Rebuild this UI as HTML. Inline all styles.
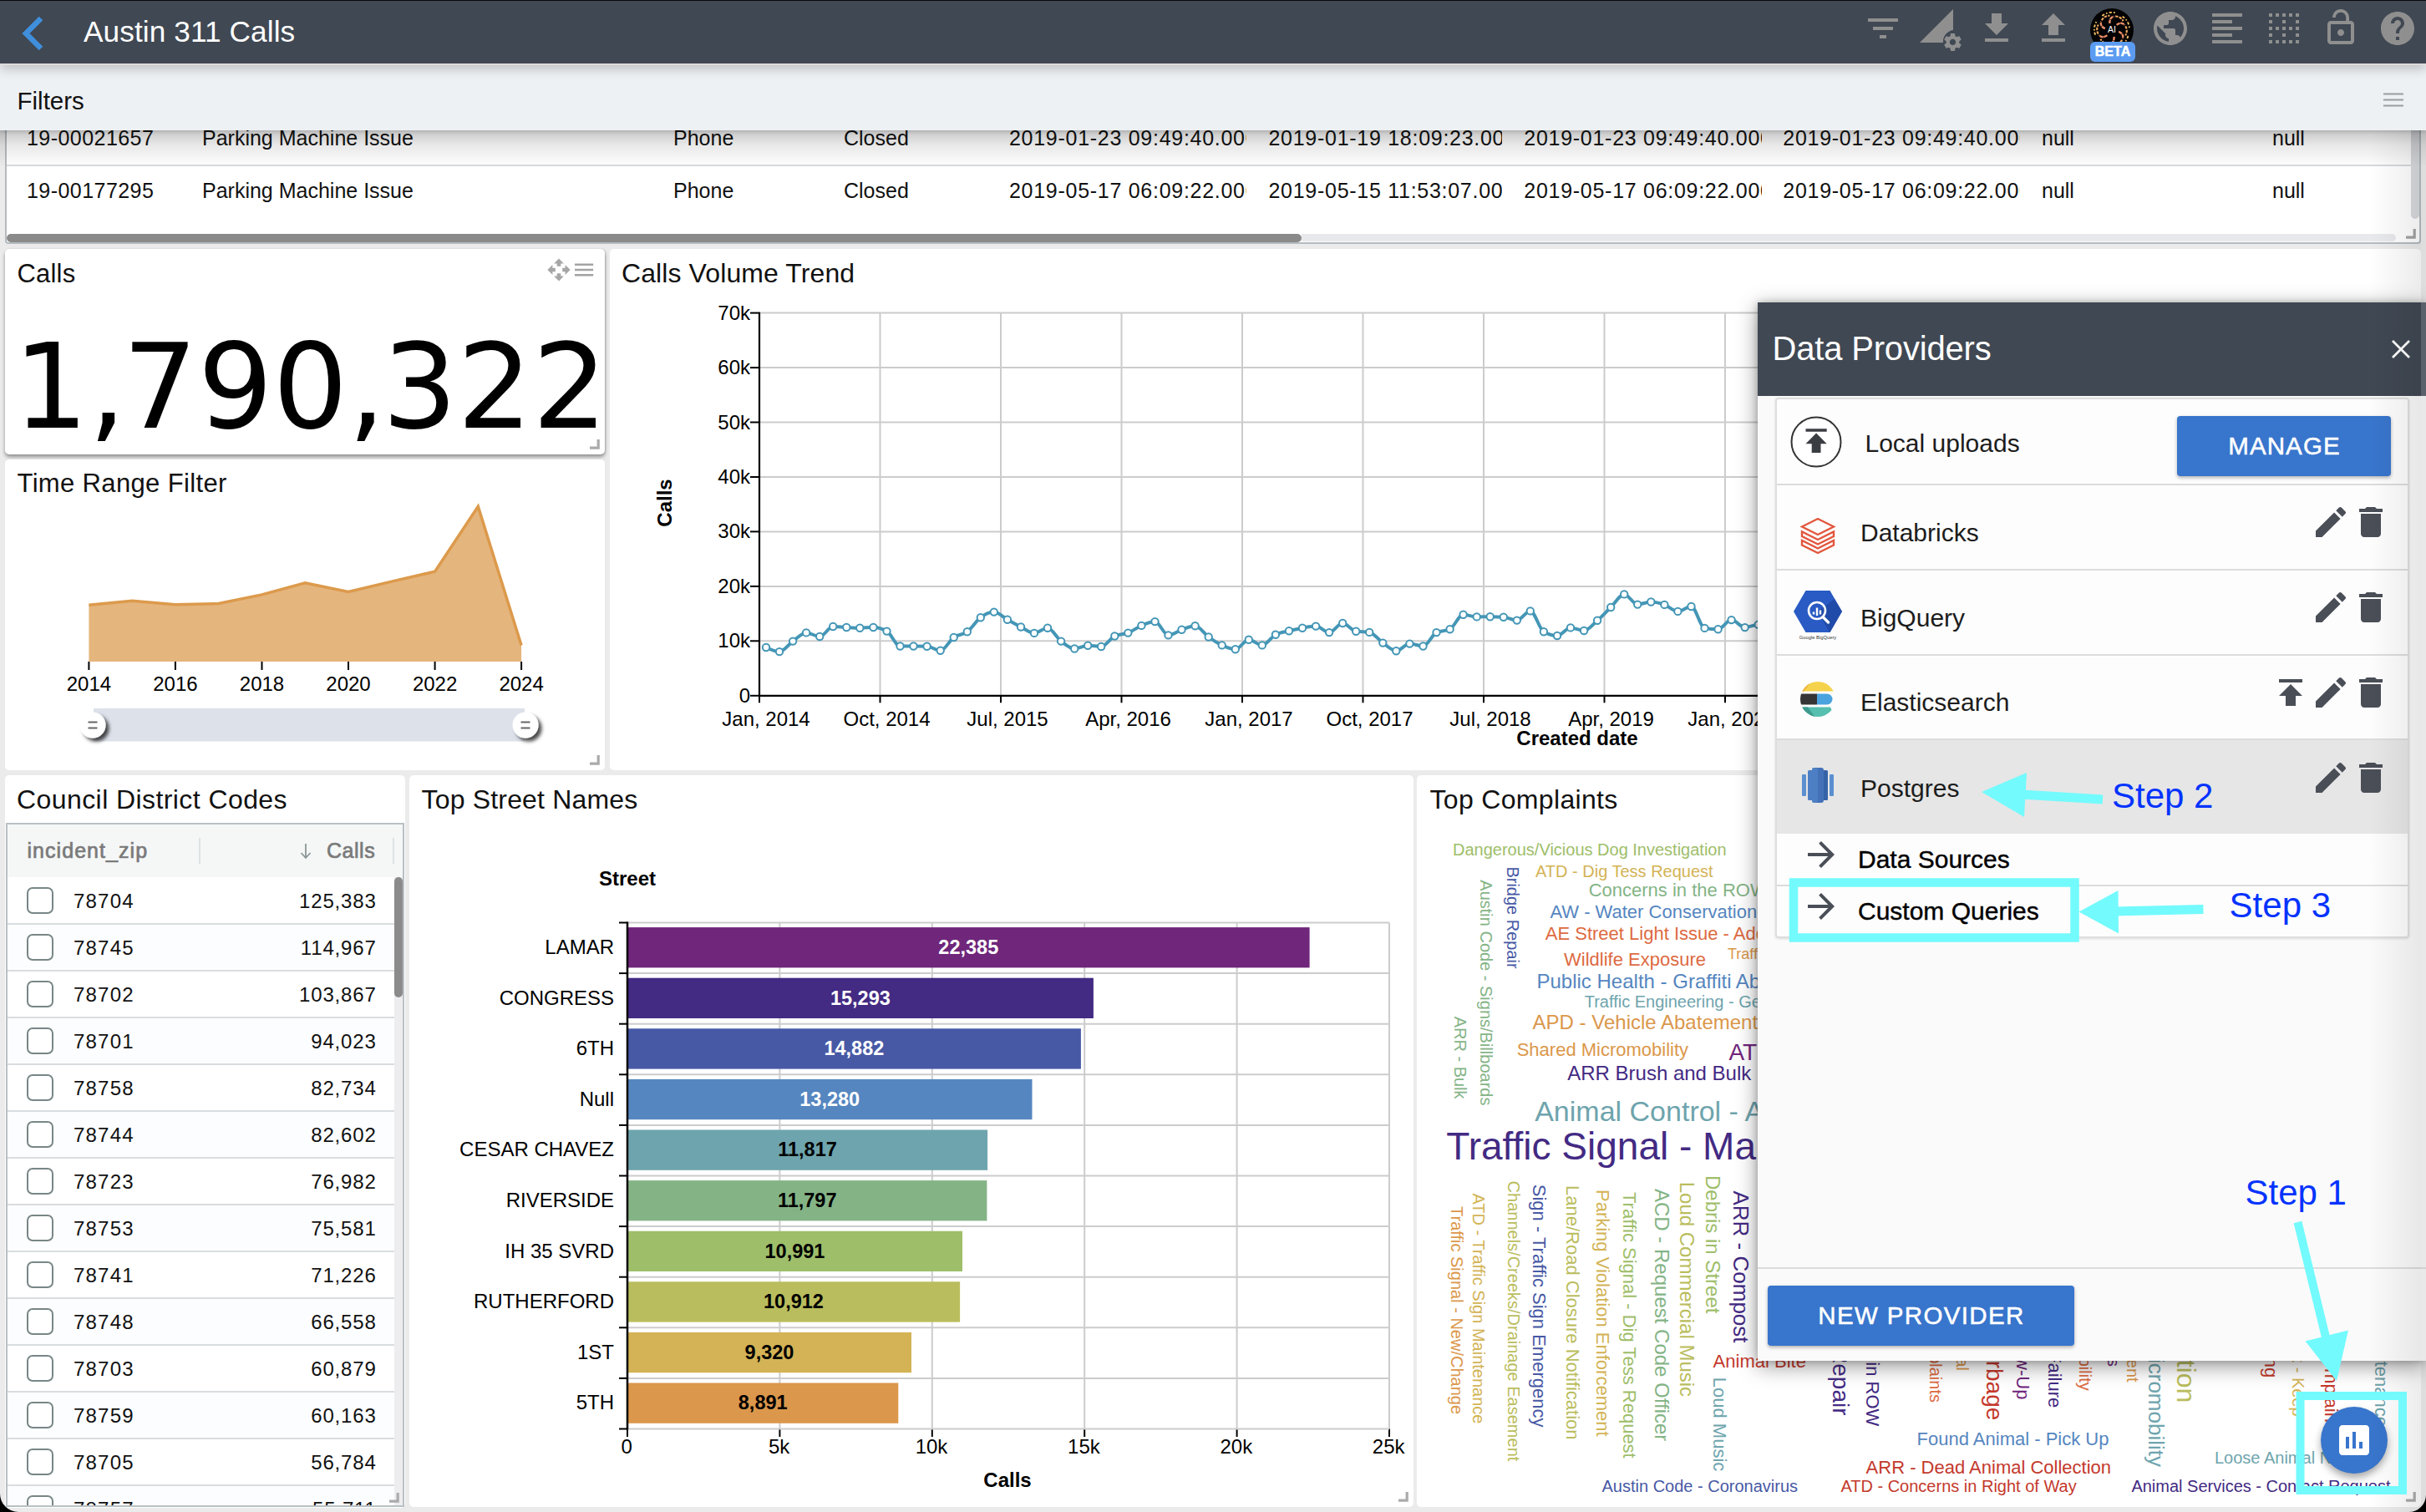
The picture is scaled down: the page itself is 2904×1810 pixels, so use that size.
<!DOCTYPE html><html lang="en"><head><meta charset="utf-8"><title>Austin 311 Calls</title><style>
html,body{margin:0;padding:0;}
body{width:2904px;height:1810px;overflow:hidden;background:#ebebeb;font-family:"Liberation Sans",sans-serif;}
#root{position:relative;width:2904px;height:1810px;overflow:hidden;background:#ebebeb;}
.t{position:absolute;white-space:nowrap;line-height:1;}
svg{overflow:visible}
svg text{white-space:pre}
</style></head><body><div id="root"><div style="position:absolute;left:6.0px;top:150.0px;width:2891.6px;height:142.0px;background:#fff;border:2px solid #b4bbc0;border-top:none;box-sizing:border-box;border-radius:0 0 4px 4px;"></div><div style="position:absolute;left:8.0px;top:197.0px;width:2878.0px;height:2.0px;background:#d5dadd;"></div><div style="position:absolute;left:32px;top:143.8px;width:198.0px;height:44px;overflow:hidden"><div class="t" style="left:0;top:8.8px;font-size:25px;color:#111;letter-spacing:0.45px">19-00021657</div></div><div style="position:absolute;left:242px;top:143.8px;width:538.0px;height:44px;overflow:hidden"><div class="t" style="left:0;top:8.8px;font-size:25px;color:#111;letter-spacing:0px">Parking Machine Issue</div></div><div style="position:absolute;left:806px;top:143.8px;width:184.0px;height:44px;overflow:hidden"><div class="t" style="left:0;top:8.8px;font-size:25px;color:#111;letter-spacing:0px">Phone</div></div><div style="position:absolute;left:1010px;top:143.8px;width:180.0px;height:44px;overflow:hidden"><div class="t" style="left:0;top:8.8px;font-size:25px;color:#111;letter-spacing:0px">Closed</div></div><div style="position:absolute;left:1208px;top:143.8px;width:283.5px;height:44px;overflow:hidden"><div class="t" style="left:0;top:8.8px;font-size:25px;color:#111;letter-spacing:0.72px">2019-01-23 09:49:40.000000</div></div><div style="position:absolute;left:1518.5px;top:143.8px;width:279.0px;height:44px;overflow:hidden"><div class="t" style="left:0;top:8.8px;font-size:25px;color:#111;letter-spacing:0.72px">2019-01-19 18:09:23.000000</div></div><div style="position:absolute;left:1824.3px;top:143.8px;width:284.3px;height:44px;overflow:hidden"><div class="t" style="left:0;top:8.8px;font-size:25px;color:#111;letter-spacing:0.72px">2019-01-23 09:49:40.000000</div></div><div style="position:absolute;left:2134.3px;top:143.8px;width:283.7px;height:44px;overflow:hidden"><div class="t" style="left:0;top:8.8px;font-size:25px;color:#111;letter-spacing:0.72px">2019-01-23 09:49:40.000000</div></div><div style="position:absolute;left:2444px;top:143.8px;width:256.0px;height:44px;overflow:hidden"><div class="t" style="left:0;top:8.8px;font-size:25px;color:#111;letter-spacing:0px">null</div></div><div style="position:absolute;left:2720px;top:143.8px;width:140.0px;height:44px;overflow:hidden"><div class="t" style="left:0;top:8.8px;font-size:25px;color:#111;letter-spacing:0px">null</div></div><div style="position:absolute;left:32px;top:207.0px;width:198.0px;height:44px;overflow:hidden"><div class="t" style="left:0;top:8.8px;font-size:25px;color:#111;letter-spacing:0.45px">19-00177295</div></div><div style="position:absolute;left:242px;top:207.0px;width:538.0px;height:44px;overflow:hidden"><div class="t" style="left:0;top:8.8px;font-size:25px;color:#111;letter-spacing:0px">Parking Machine Issue</div></div><div style="position:absolute;left:806px;top:207.0px;width:184.0px;height:44px;overflow:hidden"><div class="t" style="left:0;top:8.8px;font-size:25px;color:#111;letter-spacing:0px">Phone</div></div><div style="position:absolute;left:1010px;top:207.0px;width:180.0px;height:44px;overflow:hidden"><div class="t" style="left:0;top:8.8px;font-size:25px;color:#111;letter-spacing:0px">Closed</div></div><div style="position:absolute;left:1208px;top:207.0px;width:283.5px;height:44px;overflow:hidden"><div class="t" style="left:0;top:8.8px;font-size:25px;color:#111;letter-spacing:0.72px">2019-05-17 06:09:22.000000</div></div><div style="position:absolute;left:1518.5px;top:207.0px;width:279.0px;height:44px;overflow:hidden"><div class="t" style="left:0;top:8.8px;font-size:25px;color:#111;letter-spacing:0.72px">2019-05-15 11:53:07.000000</div></div><div style="position:absolute;left:1824.3px;top:207.0px;width:284.3px;height:44px;overflow:hidden"><div class="t" style="left:0;top:8.8px;font-size:25px;color:#111;letter-spacing:0.72px">2019-05-17 06:09:22.000000</div></div><div style="position:absolute;left:2134.3px;top:207.0px;width:283.7px;height:44px;overflow:hidden"><div class="t" style="left:0;top:8.8px;font-size:25px;color:#111;letter-spacing:0.72px">2019-05-17 06:09:22.000000</div></div><div style="position:absolute;left:2444px;top:207.0px;width:256.0px;height:44px;overflow:hidden"><div class="t" style="left:0;top:8.8px;font-size:25px;color:#111;letter-spacing:0px">null</div></div><div style="position:absolute;left:2720px;top:207.0px;width:140.0px;height:44px;overflow:hidden"><div class="t" style="left:0;top:8.8px;font-size:25px;color:#111;letter-spacing:0px">null</div></div><div style="position:absolute;left:8.0px;top:280.0px;width:1550.0px;height:10.0px;background:#8a8a8a;border-radius:5px;"></div><div style="position:absolute;left:1558.0px;top:280.0px;width:1310.0px;height:9.0px;background:#e8e9ec;border-radius:0 5px 5px 0;"></div><div style="position:absolute;left:2886.0px;top:150.0px;width:9.5px;height:112.0px;background:#d9dade;border-radius:0 0 5px 5px;"></div><svg style="position:absolute;left:2880.200px;top:274.300px" width="12" height="12" viewBox="0 0 12 12"><path d="M10.200 0v10.200H0" fill="none" stroke="#a3a3a3" stroke-width="3.200"/></svg><div style="position:absolute;left:6.0px;top:298.0px;width:718.4px;height:245.7px;background:#fff;border-radius:5px;box-shadow:0 3px 4px rgba(0,0,0,.38), 1px 0 2px rgba(0,0,0,.12);"></div><div class="t" style="top:311.8px;font-size:31px;left:20.5px;color:#111;letter-spacing:0.2px;">Calls</div><svg style="position:absolute;left:654.9px;top:308.9px" width="28" height="28" viewBox="-14 -14 28 28"><g fill="#a6a6a6"><path transform="rotate(0)" d="M0 -13.600L5.900 -7.600H2.300V-4.200H-2.300V-7.600H-5.900z"/><path transform="rotate(90)" d="M0 -13.600L5.900 -7.600H2.300V-4.200H-2.300V-7.600H-5.900z"/><path transform="rotate(180)" d="M0 -13.600L5.900 -7.600H2.300V-4.200H-2.300V-7.600H-5.900z"/><path transform="rotate(270)" d="M0 -13.600L5.900 -7.600H2.300V-4.200H-2.300V-7.600H-5.900z"/></g></svg><svg style="position:absolute;left:688px;top:314px" width="24" height="18" viewBox="0 0 24 18"><path d="M0 2.800h22.200M0 9h22.200M0 15.200h22.200" stroke="#a3a3a3" stroke-width="2.600"/></svg><div class="t" id="bignum" style="left:16px;top:392.5px;font-size:141px;font-family:'DejaVu Sans', 'Liberation Sans', sans-serif;transform-origin:0 0;transform:scaleX(1.002)">1<span style="letter-spacing:-4px">,</span>790<span style="letter-spacing:-4px">,</span>322</div><svg style="position:absolute;left:706.1px;top:526.2px" width="12" height="12" viewBox="0 0 12 12"><path d="M10.200 0v10.200H0" fill="none" stroke="#ababab" stroke-width="3.200"/></svg><div style="position:absolute;left:6.0px;top:550.0px;width:718.4px;height:372.0px;background:#fff;border-radius:5px;"></div><div class="t" style="top:563.3px;font-size:31px;left:20.5px;color:#111;letter-spacing:0.35px;">Time Range Filter</div><svg style="position:absolute;left:0;top:0" width="730" height="920" viewBox="0 0 730 920"><polygon points="106.4,792 106.4,724.3 158.2,719.3 209.9,723.8 261.7,722.5 313.5,711.9 365.2,697.9 417.0,708.5 468.8,696.1 520.6,684.2 572.3,606.4 624.1,772.6 624.1,792" fill="#e5b57e"/><polyline points="106.4,724.3 158.2,719.3 209.9,723.8 261.7,722.5 313.5,711.9 365.2,697.9 417.0,708.5 468.8,696.1 520.6,684.2 572.3,606.4 624.1,772.6" fill="none" stroke="#dc9a4c" stroke-width="3.500" stroke-linejoin="miter"/><line x1="106.4" y1="792" x2="106.4" y2="802" stroke="#000" stroke-width="2"/><text x="106.4" y="827.300" text-anchor="middle" font-family="Liberation Sans, sans-serif" font-size="24">2014</text><line x1="209.9" y1="792" x2="209.9" y2="802" stroke="#000" stroke-width="2"/><text x="209.9" y="827.300" text-anchor="middle" font-family="Liberation Sans, sans-serif" font-size="24">2016</text><line x1="313.5" y1="792" x2="313.5" y2="802" stroke="#000" stroke-width="2"/><text x="313.5" y="827.300" text-anchor="middle" font-family="Liberation Sans, sans-serif" font-size="24">2018</text><line x1="417.0" y1="792" x2="417.0" y2="802" stroke="#000" stroke-width="2"/><text x="417.0" y="827.300" text-anchor="middle" font-family="Liberation Sans, sans-serif" font-size="24">2020</text><line x1="520.6" y1="792" x2="520.6" y2="802" stroke="#000" stroke-width="2"/><text x="520.6" y="827.300" text-anchor="middle" font-family="Liberation Sans, sans-serif" font-size="24">2022</text><line x1="624.1" y1="792" x2="624.1" y2="802" stroke="#000" stroke-width="2"/><text x="624.1" y="827.300" text-anchor="middle" font-family="Liberation Sans, sans-serif" font-size="24">2024</text><rect x="111.500" y="848" width="517" height="39.500" fill="#dde1ea"/><defs><filter id="hs" x="-50%" y="-50%" width="200%" height="200%"><feDropShadow dx="4" dy="4" stdDeviation="2.300" flood-color="#000" flood-opacity=".7"/></filter></defs><line x1="111" y1="848" x2="111" y2="888" stroke="#fff" stroke-width="2"/><circle cx="111" cy="868" r="15.500" fill="#fff" filter="url(#hs)"/><path d="M105.5 864.5h11M105.5 871.5h11" stroke="#666" stroke-width="2.200"/><line x1="629" y1="848" x2="629" y2="888" stroke="#fff" stroke-width="2"/><circle cx="629" cy="868" r="15.500" fill="#fff" filter="url(#hs)"/><path d="M623.5 864.5h11M623.5 871.5h11" stroke="#666" stroke-width="2.200"/></svg><svg style="position:absolute;left:706.1px;top:904.3px" width="12" height="12" viewBox="0 0 12 12"><path d="M10.200 0v10.200H0" fill="none" stroke="#ababab" stroke-width="3.200"/></svg><div style="position:absolute;left:730.0px;top:298.0px;width:2168.0px;height:624.0px;background:#fff;border-radius:5px;"></div><div class="t" style="top:310.9px;font-size:32px;left:744.0px;color:#111;letter-spacing:0.1px;">Calls Volume Trend</div><svg style="position:absolute;left:0;top:0" width="2904" height="925" viewBox="0 0 2904 925" font-family="Liberation Sans, sans-serif"><line x1="909" y1="767.3" x2="2890" y2="767.3" stroke="#ccc" stroke-width="2"/><line x1="909" y1="701.9" x2="2890" y2="701.9" stroke="#ccc" stroke-width="2"/><line x1="909" y1="636.4" x2="2890" y2="636.4" stroke="#ccc" stroke-width="2"/><line x1="909" y1="571.0" x2="2890" y2="571.0" stroke="#ccc" stroke-width="2"/><line x1="909" y1="505.5" x2="2890" y2="505.5" stroke="#ccc" stroke-width="2"/><line x1="909" y1="440.1" x2="2890" y2="440.1" stroke="#ccc" stroke-width="2"/><line x1="909" y1="374.6" x2="2890" y2="374.6" stroke="#ccc" stroke-width="2"/><line x1="909.0" y1="832.8" x2="909.0" y2="841.3" stroke="#000" stroke-width="2"/><text x="917.0" y="868.500" text-anchor="middle" font-size="24">Jan, 2014</text><line x1="1053.5" y1="374.65" x2="1053.5" y2="832.8" stroke="#ccc" stroke-width="2"/><line x1="1053.5" y1="832.8" x2="1053.5" y2="841.3" stroke="#000" stroke-width="2"/><text x="1061.5" y="868.500" text-anchor="middle" font-size="24">Oct, 2014</text><line x1="1198.0" y1="374.65" x2="1198.0" y2="832.8" stroke="#ccc" stroke-width="2"/><line x1="1198.0" y1="832.8" x2="1198.0" y2="841.3" stroke="#000" stroke-width="2"/><text x="1206.0" y="868.500" text-anchor="middle" font-size="24">Jul, 2015</text><line x1="1342.5" y1="374.65" x2="1342.5" y2="832.8" stroke="#ccc" stroke-width="2"/><line x1="1342.5" y1="832.8" x2="1342.5" y2="841.3" stroke="#000" stroke-width="2"/><text x="1350.5" y="868.500" text-anchor="middle" font-size="24">Apr, 2016</text><line x1="1487.0" y1="374.65" x2="1487.0" y2="832.8" stroke="#ccc" stroke-width="2"/><line x1="1487.0" y1="832.8" x2="1487.0" y2="841.3" stroke="#000" stroke-width="2"/><text x="1495.0" y="868.500" text-anchor="middle" font-size="24">Jan, 2017</text><line x1="1631.5" y1="374.65" x2="1631.5" y2="832.8" stroke="#ccc" stroke-width="2"/><line x1="1631.5" y1="832.8" x2="1631.5" y2="841.3" stroke="#000" stroke-width="2"/><text x="1639.5" y="868.500" text-anchor="middle" font-size="24">Oct, 2017</text><line x1="1776.0" y1="374.65" x2="1776.0" y2="832.8" stroke="#ccc" stroke-width="2"/><line x1="1776.0" y1="832.8" x2="1776.0" y2="841.3" stroke="#000" stroke-width="2"/><text x="1784.0" y="868.500" text-anchor="middle" font-size="24">Jul, 2018</text><line x1="1920.5" y1="374.65" x2="1920.5" y2="832.8" stroke="#ccc" stroke-width="2"/><line x1="1920.5" y1="832.8" x2="1920.5" y2="841.3" stroke="#000" stroke-width="2"/><text x="1928.5" y="868.500" text-anchor="middle" font-size="24">Apr, 2019</text><line x1="2065.0" y1="374.65" x2="2065.0" y2="832.8" stroke="#ccc" stroke-width="2"/><line x1="2065.0" y1="832.8" x2="2065.0" y2="841.3" stroke="#000" stroke-width="2"/><text x="2073.0" y="868.500" text-anchor="middle" font-size="24">Jan, 2020</text><line x1="2209.5" y1="374.65" x2="2209.5" y2="832.8" stroke="#ccc" stroke-width="2"/><line x1="2209.5" y1="832.8" x2="2209.5" y2="841.3" stroke="#000" stroke-width="2"/><text x="2217.5" y="868.500" text-anchor="middle" font-size="24">Oct, 2020</text><line x1="2354.0" y1="374.65" x2="2354.0" y2="832.8" stroke="#ccc" stroke-width="2"/><line x1="2354.0" y1="832.8" x2="2354.0" y2="841.3" stroke="#000" stroke-width="2"/><text x="2362.0" y="868.500" text-anchor="middle" font-size="24">Jul, 2021</text><line x1="2498.5" y1="374.65" x2="2498.5" y2="832.8" stroke="#ccc" stroke-width="2"/><line x1="2498.5" y1="832.8" x2="2498.5" y2="841.3" stroke="#000" stroke-width="2"/><text x="2506.5" y="868.500" text-anchor="middle" font-size="24">Apr, 2022</text><line x1="2643.0" y1="374.65" x2="2643.0" y2="832.8" stroke="#ccc" stroke-width="2"/><line x1="2643.0" y1="832.8" x2="2643.0" y2="841.3" stroke="#000" stroke-width="2"/><text x="2651.0" y="868.500" text-anchor="middle" font-size="24">Jan, 2023</text><line x1="2787.5" y1="374.65" x2="2787.5" y2="832.8" stroke="#ccc" stroke-width="2"/><line x1="2787.5" y1="832.8" x2="2787.5" y2="841.3" stroke="#000" stroke-width="2"/><text x="2795.5" y="868.500" text-anchor="middle" font-size="24">Oct, 2023</text><line x1="898" y1="832.8" x2="909" y2="832.8" stroke="#000" stroke-width="2"/><text x="898" y="840.8" text-anchor="end" font-size="24">0</text><line x1="898" y1="767.3" x2="909" y2="767.3" stroke="#000" stroke-width="2"/><text x="898" y="775.3" text-anchor="end" font-size="24">10k</text><line x1="898" y1="701.9" x2="909" y2="701.9" stroke="#000" stroke-width="2"/><text x="898" y="709.9" text-anchor="end" font-size="24">20k</text><line x1="898" y1="636.4" x2="909" y2="636.4" stroke="#000" stroke-width="2"/><text x="898" y="644.4" text-anchor="end" font-size="24">30k</text><line x1="898" y1="571.0" x2="909" y2="571.0" stroke="#000" stroke-width="2"/><text x="898" y="579.0" text-anchor="end" font-size="24">40k</text><line x1="898" y1="505.5" x2="909" y2="505.5" stroke="#000" stroke-width="2"/><text x="898" y="513.5" text-anchor="end" font-size="24">50k</text><line x1="898" y1="440.1" x2="909" y2="440.1" stroke="#000" stroke-width="2"/><text x="898" y="448.1" text-anchor="end" font-size="24">60k</text><line x1="898" y1="374.6" x2="909" y2="374.6" stroke="#000" stroke-width="2"/><text x="898" y="382.6" text-anchor="end" font-size="24">70k</text><path d="M909 373.65V832.8H2890" fill="none" stroke="#000" stroke-width="2.200"/><path d="M917.0 775.0C922.4 777.6 927.7 780.1 933.0 780.1C938.4 780.1 943.8 771.4 949.1 767.6C954.5 763.8 959.8 757.4 965.1 757.4C970.5 757.4 975.9 762.0 981.2 762.0C986.6 762.0 991.9 750.0 997.2 750.0C1002.6 750.0 1007.9 750.7 1013.3 751.0C1018.6 751.3 1024.0 751.7 1029.3 751.7C1034.7 751.7 1040.0 751.0 1045.4 751.0C1050.8 751.0 1056.1 752.5 1061.5 755.6C1066.8 758.6 1072.2 773.5 1077.5 773.5C1082.8 773.5 1088.2 773.5 1093.5 773.5C1098.9 773.5 1104.2 773.6 1109.6 773.7C1115.0 773.9 1120.3 778.8 1125.7 778.8C1131.0 778.8 1136.4 766.7 1141.7 763.0C1147.0 759.2 1152.4 760.3 1157.8 756.3C1163.1 752.4 1168.5 743.2 1173.8 739.2C1179.1 735.3 1184.5 732.6 1189.8 732.6C1195.2 732.6 1200.5 738.8 1205.9 741.8C1211.2 744.8 1216.6 747.8 1222.0 750.5C1227.3 753.2 1232.7 757.9 1238.0 757.9C1243.3 757.9 1248.7 751.7 1254.0 751.7C1259.4 751.7 1264.8 763.5 1270.1 767.6C1275.5 771.7 1280.8 776.5 1286.2 776.5C1291.5 776.5 1296.9 772.7 1302.2 772.7C1307.5 772.7 1312.9 774.0 1318.2 774.0C1323.6 774.0 1329.0 764.0 1334.3 761.5C1339.6 758.9 1345.0 759.7 1350.3 757.6C1355.7 755.5 1361.0 751.2 1366.4 748.9C1371.8 746.7 1377.1 744.1 1382.5 744.1C1387.8 744.1 1393.2 760.4 1398.5 760.4C1403.8 760.4 1409.2 755.7 1414.5 753.8C1419.9 751.9 1425.2 749.2 1430.6 749.2C1436.0 749.2 1441.3 758.6 1446.7 762.5C1452.0 766.4 1457.4 770.0 1462.7 772.4C1468.0 774.9 1473.4 777.3 1478.8 777.3C1484.1 777.3 1489.5 765.7 1494.8 765.7C1500.2 765.7 1505.5 772.4 1510.8 772.4C1516.2 772.4 1521.5 762.6 1526.9 759.7C1532.2 756.9 1537.6 756.6 1543.0 755.3C1548.3 754.0 1553.7 752.6 1559.0 751.7C1564.4 750.7 1569.7 749.6 1575.1 749.6C1580.4 749.6 1585.8 757.1 1591.1 757.1C1596.5 757.1 1601.8 746.0 1607.2 746.0C1612.5 746.0 1617.9 755.1 1623.2 755.8C1628.5 756.5 1633.9 756.2 1639.2 756.9C1644.6 757.6 1650.0 765.9 1655.3 769.6C1660.7 773.3 1666.0 779.2 1671.3 779.2C1676.7 779.2 1682.0 770.6 1687.4 770.6C1692.8 770.6 1698.1 773.5 1703.5 773.5C1708.8 773.5 1714.2 759.7 1719.5 757.1C1724.9 754.5 1730.2 755.8 1735.6 753.2C1740.9 750.6 1746.2 735.8 1751.6 735.8C1757.0 735.8 1762.3 738.4 1767.7 738.4C1773.0 738.4 1778.4 738.2 1783.7 738.2C1789.0 738.2 1794.4 738.3 1799.8 738.7C1805.1 739.0 1810.5 742.6 1815.8 742.6C1821.2 742.6 1826.5 731.4 1831.8 731.4C1837.2 731.4 1842.5 753.2 1847.9 756.3C1853.2 759.5 1858.6 761.0 1864.0 761.0C1869.3 761.0 1874.7 751.4 1880.0 751.4C1885.4 751.4 1890.7 755.0 1896.1 755.0C1901.4 755.0 1906.8 747.5 1912.1 742.8C1917.5 738.2 1922.8 732.2 1928.2 727.0C1933.5 721.8 1938.9 711.4 1944.2 711.4C1949.5 711.4 1954.9 723.6 1960.2 723.6C1965.6 723.6 1971.0 720.5 1976.3 720.5C1981.7 720.5 1987.0 722.0 1992.4 723.9C1997.7 725.8 2003.1 731.9 2008.4 731.9C2013.8 731.9 2019.1 726.0 2024.5 726.0C2029.8 726.0 2035.2 751.1 2040.5 751.9C2045.9 752.8 2051.2 753.2 2056.6 753.2C2061.9 753.2 2067.3 742.1 2072.6 742.1C2078.0 742.1 2083.3 751.1 2088.7 751.1C2094.0 751.1 2099.3 747.8 2104.7 747.8C2110.0 747.8 2115.4 766.7 2120.8 770.0C2126.1 773.3 2131.5 775.0 2136.8 775.0C2142.2 775.0 2147.5 770.5 2152.9 768.0C2158.2 765.5 2163.6 760.0 2168.9 760.0C2174.2 760.0 2179.6 765.0 2184.9 765.0C2190.3 765.0 2195.7 760.5 2201.0 758.0C2206.3 755.5 2211.7 750.0 2217.1 750.0C2222.4 750.0 2227.8 752.5 2233.1 755.0" fill="none" stroke="#4496b6" stroke-width="4" stroke-linejoin="round"/><circle cx="917.0" cy="775.0" r="4.200" fill="#fff" stroke="#4496b6" stroke-width="2"/><circle cx="933.0" cy="780.1" r="4.200" fill="#fff" stroke="#4496b6" stroke-width="2"/><circle cx="949.1" cy="767.6" r="4.200" fill="#fff" stroke="#4496b6" stroke-width="2"/><circle cx="965.1" cy="757.4" r="4.200" fill="#fff" stroke="#4496b6" stroke-width="2"/><circle cx="981.2" cy="762.0" r="4.200" fill="#fff" stroke="#4496b6" stroke-width="2"/><circle cx="997.2" cy="750.0" r="4.200" fill="#fff" stroke="#4496b6" stroke-width="2"/><circle cx="1013.3" cy="751.0" r="4.200" fill="#fff" stroke="#4496b6" stroke-width="2"/><circle cx="1029.3" cy="751.7" r="4.200" fill="#fff" stroke="#4496b6" stroke-width="2"/><circle cx="1045.4" cy="751.0" r="4.200" fill="#fff" stroke="#4496b6" stroke-width="2"/><circle cx="1061.5" cy="755.6" r="4.200" fill="#fff" stroke="#4496b6" stroke-width="2"/><circle cx="1077.5" cy="773.5" r="4.200" fill="#fff" stroke="#4496b6" stroke-width="2"/><circle cx="1093.5" cy="773.5" r="4.200" fill="#fff" stroke="#4496b6" stroke-width="2"/><circle cx="1109.6" cy="773.7" r="4.200" fill="#fff" stroke="#4496b6" stroke-width="2"/><circle cx="1125.7" cy="778.8" r="4.200" fill="#fff" stroke="#4496b6" stroke-width="2"/><circle cx="1141.7" cy="763.0" r="4.200" fill="#fff" stroke="#4496b6" stroke-width="2"/><circle cx="1157.8" cy="756.3" r="4.200" fill="#fff" stroke="#4496b6" stroke-width="2"/><circle cx="1173.8" cy="739.2" r="4.200" fill="#fff" stroke="#4496b6" stroke-width="2"/><circle cx="1189.8" cy="732.6" r="4.200" fill="#fff" stroke="#4496b6" stroke-width="2"/><circle cx="1205.9" cy="741.8" r="4.200" fill="#fff" stroke="#4496b6" stroke-width="2"/><circle cx="1222.0" cy="750.5" r="4.200" fill="#fff" stroke="#4496b6" stroke-width="2"/><circle cx="1238.0" cy="757.9" r="4.200" fill="#fff" stroke="#4496b6" stroke-width="2"/><circle cx="1254.0" cy="751.7" r="4.200" fill="#fff" stroke="#4496b6" stroke-width="2"/><circle cx="1270.1" cy="767.6" r="4.200" fill="#fff" stroke="#4496b6" stroke-width="2"/><circle cx="1286.2" cy="776.5" r="4.200" fill="#fff" stroke="#4496b6" stroke-width="2"/><circle cx="1302.2" cy="772.7" r="4.200" fill="#fff" stroke="#4496b6" stroke-width="2"/><circle cx="1318.2" cy="774.0" r="4.200" fill="#fff" stroke="#4496b6" stroke-width="2"/><circle cx="1334.3" cy="761.5" r="4.200" fill="#fff" stroke="#4496b6" stroke-width="2"/><circle cx="1350.3" cy="757.6" r="4.200" fill="#fff" stroke="#4496b6" stroke-width="2"/><circle cx="1366.4" cy="748.9" r="4.200" fill="#fff" stroke="#4496b6" stroke-width="2"/><circle cx="1382.5" cy="744.1" r="4.200" fill="#fff" stroke="#4496b6" stroke-width="2"/><circle cx="1398.5" cy="760.4" r="4.200" fill="#fff" stroke="#4496b6" stroke-width="2"/><circle cx="1414.5" cy="753.8" r="4.200" fill="#fff" stroke="#4496b6" stroke-width="2"/><circle cx="1430.6" cy="749.2" r="4.200" fill="#fff" stroke="#4496b6" stroke-width="2"/><circle cx="1446.7" cy="762.5" r="4.200" fill="#fff" stroke="#4496b6" stroke-width="2"/><circle cx="1462.7" cy="772.4" r="4.200" fill="#fff" stroke="#4496b6" stroke-width="2"/><circle cx="1478.8" cy="777.3" r="4.200" fill="#fff" stroke="#4496b6" stroke-width="2"/><circle cx="1494.8" cy="765.7" r="4.200" fill="#fff" stroke="#4496b6" stroke-width="2"/><circle cx="1510.8" cy="772.4" r="4.200" fill="#fff" stroke="#4496b6" stroke-width="2"/><circle cx="1526.9" cy="759.7" r="4.200" fill="#fff" stroke="#4496b6" stroke-width="2"/><circle cx="1543.0" cy="755.3" r="4.200" fill="#fff" stroke="#4496b6" stroke-width="2"/><circle cx="1559.0" cy="751.7" r="4.200" fill="#fff" stroke="#4496b6" stroke-width="2"/><circle cx="1575.1" cy="749.6" r="4.200" fill="#fff" stroke="#4496b6" stroke-width="2"/><circle cx="1591.1" cy="757.1" r="4.200" fill="#fff" stroke="#4496b6" stroke-width="2"/><circle cx="1607.2" cy="746.0" r="4.200" fill="#fff" stroke="#4496b6" stroke-width="2"/><circle cx="1623.2" cy="755.8" r="4.200" fill="#fff" stroke="#4496b6" stroke-width="2"/><circle cx="1639.2" cy="756.9" r="4.200" fill="#fff" stroke="#4496b6" stroke-width="2"/><circle cx="1655.3" cy="769.6" r="4.200" fill="#fff" stroke="#4496b6" stroke-width="2"/><circle cx="1671.3" cy="779.2" r="4.200" fill="#fff" stroke="#4496b6" stroke-width="2"/><circle cx="1687.4" cy="770.6" r="4.200" fill="#fff" stroke="#4496b6" stroke-width="2"/><circle cx="1703.5" cy="773.5" r="4.200" fill="#fff" stroke="#4496b6" stroke-width="2"/><circle cx="1719.5" cy="757.1" r="4.200" fill="#fff" stroke="#4496b6" stroke-width="2"/><circle cx="1735.6" cy="753.2" r="4.200" fill="#fff" stroke="#4496b6" stroke-width="2"/><circle cx="1751.6" cy="735.8" r="4.200" fill="#fff" stroke="#4496b6" stroke-width="2"/><circle cx="1767.7" cy="738.4" r="4.200" fill="#fff" stroke="#4496b6" stroke-width="2"/><circle cx="1783.7" cy="738.2" r="4.200" fill="#fff" stroke="#4496b6" stroke-width="2"/><circle cx="1799.8" cy="738.7" r="4.200" fill="#fff" stroke="#4496b6" stroke-width="2"/><circle cx="1815.8" cy="742.6" r="4.200" fill="#fff" stroke="#4496b6" stroke-width="2"/><circle cx="1831.8" cy="731.4" r="4.200" fill="#fff" stroke="#4496b6" stroke-width="2"/><circle cx="1847.9" cy="756.3" r="4.200" fill="#fff" stroke="#4496b6" stroke-width="2"/><circle cx="1864.0" cy="761.0" r="4.200" fill="#fff" stroke="#4496b6" stroke-width="2"/><circle cx="1880.0" cy="751.4" r="4.200" fill="#fff" stroke="#4496b6" stroke-width="2"/><circle cx="1896.1" cy="755.0" r="4.200" fill="#fff" stroke="#4496b6" stroke-width="2"/><circle cx="1912.1" cy="742.8" r="4.200" fill="#fff" stroke="#4496b6" stroke-width="2"/><circle cx="1928.2" cy="727.0" r="4.200" fill="#fff" stroke="#4496b6" stroke-width="2"/><circle cx="1944.2" cy="711.4" r="4.200" fill="#fff" stroke="#4496b6" stroke-width="2"/><circle cx="1960.2" cy="723.6" r="4.200" fill="#fff" stroke="#4496b6" stroke-width="2"/><circle cx="1976.3" cy="720.5" r="4.200" fill="#fff" stroke="#4496b6" stroke-width="2"/><circle cx="1992.4" cy="723.9" r="4.200" fill="#fff" stroke="#4496b6" stroke-width="2"/><circle cx="2008.4" cy="731.9" r="4.200" fill="#fff" stroke="#4496b6" stroke-width="2"/><circle cx="2024.5" cy="726.0" r="4.200" fill="#fff" stroke="#4496b6" stroke-width="2"/><circle cx="2040.5" cy="751.9" r="4.200" fill="#fff" stroke="#4496b6" stroke-width="2"/><circle cx="2056.6" cy="753.2" r="4.200" fill="#fff" stroke="#4496b6" stroke-width="2"/><circle cx="2072.6" cy="742.1" r="4.200" fill="#fff" stroke="#4496b6" stroke-width="2"/><circle cx="2088.7" cy="751.1" r="4.200" fill="#fff" stroke="#4496b6" stroke-width="2"/><circle cx="2104.7" cy="747.8" r="4.200" fill="#fff" stroke="#4496b6" stroke-width="2"/><circle cx="2120.8" cy="770.0" r="4.200" fill="#fff" stroke="#4496b6" stroke-width="2"/><circle cx="2136.8" cy="775.0" r="4.200" fill="#fff" stroke="#4496b6" stroke-width="2"/><circle cx="2152.9" cy="768.0" r="4.200" fill="#fff" stroke="#4496b6" stroke-width="2"/><circle cx="2168.9" cy="760.0" r="4.200" fill="#fff" stroke="#4496b6" stroke-width="2"/><circle cx="2184.9" cy="765.0" r="4.200" fill="#fff" stroke="#4496b6" stroke-width="2"/><circle cx="2201.0" cy="758.0" r="4.200" fill="#fff" stroke="#4496b6" stroke-width="2"/><circle cx="2217.1" cy="750.0" r="4.200" fill="#fff" stroke="#4496b6" stroke-width="2"/><circle cx="2233.1" cy="755.0" r="4.200" fill="#fff" stroke="#4496b6" stroke-width="2"/><text x="1888" y="892" text-anchor="middle" font-size="24" font-weight="700">Created date</text><text transform="translate(803.500,602) rotate(-90)" text-anchor="middle" font-size="24" font-weight="700">Calls</text></svg><div style="position:absolute;left:6.0px;top:928.0px;width:478.5px;height:876.5px;background:#fff;border-radius:5px;overflow:hidden;"></div><div class="t" style="top:940.9px;font-size:32px;left:20.0px;color:#111;letter-spacing:0.42px;">Council District Codes</div><div style="position:absolute;left:7.0px;top:984.7px;width:477.0px;height:819.8px;border:2px solid #b9c0c4;box-sizing:border-box;overflow:hidden;background:#fff;"><div style="position:absolute;left:0.0px;top:0.0px;width:474.0px;height:63.4px;background:#f5f7f7;"></div><div class="t" style="top:19.4px;font-size:25px;left:23.5px;color:#7a7a7a;letter-spacing:1.05px;color:#7a7a7a;-webkit-text-stroke:0.7px #7a7a7a;">incident_zip</div><div style="position:absolute;left:229.0px;top:16.0px;width:2.0px;height:31.0px;background:#dde2e4;"></div><div style="position:absolute;left:461.0px;top:16.0px;width:2.0px;height:31.0px;background:#dde2e4;"></div><svg style="position:absolute;left:350px;top:22px" width="14" height="20" viewBox="0 0 14 20"><path d="M7 1v17M1.500 12L7 18l5.500-6" fill="none" stroke="#8a9696" stroke-width="1.800"/></svg><div class="t" style="right:32.8px;top:19.4px;font-size:25px;letter-spacing:0.55px;color:#7a7a7a;-webkit-text-stroke:0.7px #7a7a7a;">Calls</div><div style="position:absolute;left:0.0px;top:64.6px;width:463.0px;height:56.0px;background:#fff;border-bottom:2px solid #d9dddf;box-sizing:border-box;"></div><div style="position:absolute;left:23.0px;top:75.4px;width:32.0px;height:32.0px;border:2.400px solid #788686;border-radius:7px;box-sizing:border-box;background:#fff;"></div><div class="t" style="top:80.0px;font-size:24px;left:79.0px;color:#111;letter-spacing:1.2px;">78704</div><div class="t" style="right:31.3px;top:80.0px;font-size:24px;letter-spacing:0.85px;color:#111">125,383</div><div style="position:absolute;left:0.0px;top:120.6px;width:463.0px;height:56.0px;background:#fcfdfe;border-bottom:2px solid #d9dddf;box-sizing:border-box;"></div><div style="position:absolute;left:23.0px;top:131.4px;width:32.0px;height:32.0px;border:2.400px solid #788686;border-radius:7px;box-sizing:border-box;background:#fff;"></div><div class="t" style="top:136.0px;font-size:24px;left:79.0px;color:#111;letter-spacing:1.2px;">78745</div><div class="t" style="right:31.3px;top:136.0px;font-size:24px;letter-spacing:0.85px;color:#111">114,967</div><div style="position:absolute;left:0.0px;top:176.6px;width:463.0px;height:56.0px;background:#fff;border-bottom:2px solid #d9dddf;box-sizing:border-box;"></div><div style="position:absolute;left:23.0px;top:187.4px;width:32.0px;height:32.0px;border:2.400px solid #788686;border-radius:7px;box-sizing:border-box;background:#fff;"></div><div class="t" style="top:192.0px;font-size:24px;left:79.0px;color:#111;letter-spacing:1.2px;">78702</div><div class="t" style="right:31.3px;top:192.0px;font-size:24px;letter-spacing:0.85px;color:#111">103,867</div><div style="position:absolute;left:0.0px;top:232.6px;width:463.0px;height:56.0px;background:#fcfdfe;border-bottom:2px solid #d9dddf;box-sizing:border-box;"></div><div style="position:absolute;left:23.0px;top:243.4px;width:32.0px;height:32.0px;border:2.400px solid #788686;border-radius:7px;box-sizing:border-box;background:#fff;"></div><div class="t" style="top:248.0px;font-size:24px;left:79.0px;color:#111;letter-spacing:1.2px;">78701</div><div class="t" style="right:31.3px;top:248.0px;font-size:24px;letter-spacing:0.85px;color:#111">94,023</div><div style="position:absolute;left:0.0px;top:288.6px;width:463.0px;height:56.0px;background:#fff;border-bottom:2px solid #d9dddf;box-sizing:border-box;"></div><div style="position:absolute;left:23.0px;top:299.4px;width:32.0px;height:32.0px;border:2.400px solid #788686;border-radius:7px;box-sizing:border-box;background:#fff;"></div><div class="t" style="top:304.0px;font-size:24px;left:79.0px;color:#111;letter-spacing:1.2px;">78758</div><div class="t" style="right:31.3px;top:304.0px;font-size:24px;letter-spacing:0.85px;color:#111">82,734</div><div style="position:absolute;left:0.0px;top:344.6px;width:463.0px;height:56.0px;background:#fcfdfe;border-bottom:2px solid #d9dddf;box-sizing:border-box;"></div><div style="position:absolute;left:23.0px;top:355.4px;width:32.0px;height:32.0px;border:2.400px solid #788686;border-radius:7px;box-sizing:border-box;background:#fff;"></div><div class="t" style="top:360.0px;font-size:24px;left:79.0px;color:#111;letter-spacing:1.2px;">78744</div><div class="t" style="right:31.3px;top:360.0px;font-size:24px;letter-spacing:0.85px;color:#111">82,602</div><div style="position:absolute;left:0.0px;top:400.6px;width:463.0px;height:56.0px;background:#fff;border-bottom:2px solid #d9dddf;box-sizing:border-box;"></div><div style="position:absolute;left:23.0px;top:411.4px;width:32.0px;height:32.0px;border:2.400px solid #788686;border-radius:7px;box-sizing:border-box;background:#fff;"></div><div class="t" style="top:416.0px;font-size:24px;left:79.0px;color:#111;letter-spacing:1.2px;">78723</div><div class="t" style="right:31.3px;top:416.0px;font-size:24px;letter-spacing:0.85px;color:#111">76,982</div><div style="position:absolute;left:0.0px;top:456.6px;width:463.0px;height:56.0px;background:#fcfdfe;border-bottom:2px solid #d9dddf;box-sizing:border-box;"></div><div style="position:absolute;left:23.0px;top:467.4px;width:32.0px;height:32.0px;border:2.400px solid #788686;border-radius:7px;box-sizing:border-box;background:#fff;"></div><div class="t" style="top:472.0px;font-size:24px;left:79.0px;color:#111;letter-spacing:1.2px;">78753</div><div class="t" style="right:31.3px;top:472.0px;font-size:24px;letter-spacing:0.85px;color:#111">75,581</div><div style="position:absolute;left:0.0px;top:512.6px;width:463.0px;height:56.0px;background:#fff;border-bottom:2px solid #d9dddf;box-sizing:border-box;"></div><div style="position:absolute;left:23.0px;top:523.4px;width:32.0px;height:32.0px;border:2.400px solid #788686;border-radius:7px;box-sizing:border-box;background:#fff;"></div><div class="t" style="top:528.0px;font-size:24px;left:79.0px;color:#111;letter-spacing:1.2px;">78741</div><div class="t" style="right:31.3px;top:528.0px;font-size:24px;letter-spacing:0.85px;color:#111">71,226</div><div style="position:absolute;left:0.0px;top:568.6px;width:463.0px;height:56.0px;background:#fcfdfe;border-bottom:2px solid #d9dddf;box-sizing:border-box;"></div><div style="position:absolute;left:23.0px;top:579.4px;width:32.0px;height:32.0px;border:2.400px solid #788686;border-radius:7px;box-sizing:border-box;background:#fff;"></div><div class="t" style="top:584.0px;font-size:24px;left:79.0px;color:#111;letter-spacing:1.2px;">78748</div><div class="t" style="right:31.3px;top:584.0px;font-size:24px;letter-spacing:0.85px;color:#111">66,558</div><div style="position:absolute;left:0.0px;top:624.6px;width:463.0px;height:56.0px;background:#fff;border-bottom:2px solid #d9dddf;box-sizing:border-box;"></div><div style="position:absolute;left:23.0px;top:635.4px;width:32.0px;height:32.0px;border:2.400px solid #788686;border-radius:7px;box-sizing:border-box;background:#fff;"></div><div class="t" style="top:640.0px;font-size:24px;left:79.0px;color:#111;letter-spacing:1.2px;">78703</div><div class="t" style="right:31.3px;top:640.0px;font-size:24px;letter-spacing:0.85px;color:#111">60,879</div><div style="position:absolute;left:0.0px;top:680.6px;width:463.0px;height:56.0px;background:#fcfdfe;border-bottom:2px solid #d9dddf;box-sizing:border-box;"></div><div style="position:absolute;left:23.0px;top:691.4px;width:32.0px;height:32.0px;border:2.400px solid #788686;border-radius:7px;box-sizing:border-box;background:#fff;"></div><div class="t" style="top:696.0px;font-size:24px;left:79.0px;color:#111;letter-spacing:1.2px;">78759</div><div class="t" style="right:31.3px;top:696.0px;font-size:24px;letter-spacing:0.85px;color:#111">60,163</div><div style="position:absolute;left:0.0px;top:736.6px;width:463.0px;height:56.0px;background:#fff;border-bottom:2px solid #d9dddf;box-sizing:border-box;"></div><div style="position:absolute;left:23.0px;top:747.4px;width:32.0px;height:32.0px;border:2.400px solid #788686;border-radius:7px;box-sizing:border-box;background:#fff;"></div><div class="t" style="top:752.0px;font-size:24px;left:79.0px;color:#111;letter-spacing:1.2px;">78705</div><div class="t" style="right:31.3px;top:752.0px;font-size:24px;letter-spacing:0.85px;color:#111">56,784</div><div style="position:absolute;left:0.0px;top:792.6px;width:463.0px;height:56.0px;background:#fcfdfe;border-bottom:2px solid #d9dddf;box-sizing:border-box;"></div><div style="position:absolute;left:23.0px;top:803.4px;width:32.0px;height:32.0px;border:2.400px solid #788686;border-radius:7px;box-sizing:border-box;background:#fff;"></div><div class="t" style="top:808.0px;font-size:24px;left:79.0px;color:#111;letter-spacing:1.2px;">78757</div><div class="t" style="right:31.3px;top:808.0px;font-size:24px;letter-spacing:0.85px;color:#111">55,711</div><div style="position:absolute;left:463.0px;top:63.4px;width:11.0px;height:760.0px;background:#ededf0;"></div><div style="position:absolute;left:463.0px;top:63.4px;width:9.5px;height:143.5px;background:#8b8b8b;border-radius:5px;"></div></div><svg style="position:absolute;left:466.1px;top:1787.4px" width="12" height="12" viewBox="0 0 12 12"><path d="M10.200 0v10.200H0" fill="none" stroke="#ababab" stroke-width="3.200"/></svg><div style="position:absolute;left:490.0px;top:928.0px;width:1202.0px;height:876.0px;background:#fff;border-radius:5px;"></div><div class="t" style="top:940.9px;font-size:32px;left:504.5px;color:#111;letter-spacing:0.18px;">Top Street Names</div><svg style="position:absolute;left:0;top:0" width="1700" height="1810" viewBox="0 0 1700 1810" font-family="Liberation Sans, sans-serif"><line x1="751.0" y1="1710.5" x2="751.0" y2="1720.0" stroke="#000" stroke-width="2"/><text x="750.2" y="1740" text-anchor="middle" font-size="24">0</text><line x1="933.4" y1="1104.5" x2="933.4" y2="1710.5" stroke="#ccc" stroke-width="2"/><line x1="933.4" y1="1710.5" x2="933.4" y2="1720.0" stroke="#000" stroke-width="2"/><text x="932.6" y="1740" text-anchor="middle" font-size="24">5k</text><line x1="1115.8" y1="1104.5" x2="1115.8" y2="1710.5" stroke="#ccc" stroke-width="2"/><line x1="1115.8" y1="1710.5" x2="1115.8" y2="1720.0" stroke="#000" stroke-width="2"/><text x="1115.0" y="1740" text-anchor="middle" font-size="24">10k</text><line x1="1298.2" y1="1104.5" x2="1298.2" y2="1710.5" stroke="#ccc" stroke-width="2"/><line x1="1298.2" y1="1710.5" x2="1298.2" y2="1720.0" stroke="#000" stroke-width="2"/><text x="1297.4" y="1740" text-anchor="middle" font-size="24">15k</text><line x1="1480.6" y1="1104.5" x2="1480.6" y2="1710.5" stroke="#ccc" stroke-width="2"/><line x1="1480.6" y1="1710.5" x2="1480.6" y2="1720.0" stroke="#000" stroke-width="2"/><text x="1479.8" y="1740" text-anchor="middle" font-size="24">20k</text><line x1="1663.0" y1="1104.5" x2="1663.0" y2="1710.5" stroke="#ccc" stroke-width="2"/><line x1="1663.0" y1="1710.5" x2="1663.0" y2="1720.0" stroke="#000" stroke-width="2"/><text x="1662.2" y="1740" text-anchor="middle" font-size="24">25k</text><line x1="751" y1="1104.5" x2="1663" y2="1104.5" stroke="#ccc" stroke-width="2"/><line x1="741" y1="1104.5" x2="751" y2="1104.5" stroke="#000" stroke-width="2"/><line x1="751" y1="1165.1" x2="1663" y2="1165.1" stroke="#ccc" stroke-width="2"/><line x1="741" y1="1165.1" x2="751" y2="1165.1" stroke="#000" stroke-width="2"/><line x1="751" y1="1225.7" x2="1663" y2="1225.7" stroke="#ccc" stroke-width="2"/><line x1="741" y1="1225.7" x2="751" y2="1225.7" stroke="#000" stroke-width="2"/><line x1="751" y1="1286.3" x2="1663" y2="1286.3" stroke="#ccc" stroke-width="2"/><line x1="741" y1="1286.3" x2="751" y2="1286.3" stroke="#000" stroke-width="2"/><line x1="751" y1="1346.9" x2="1663" y2="1346.9" stroke="#ccc" stroke-width="2"/><line x1="741" y1="1346.9" x2="751" y2="1346.9" stroke="#000" stroke-width="2"/><line x1="751" y1="1407.5" x2="1663" y2="1407.5" stroke="#ccc" stroke-width="2"/><line x1="741" y1="1407.5" x2="751" y2="1407.5" stroke="#000" stroke-width="2"/><line x1="751" y1="1468.1" x2="1663" y2="1468.1" stroke="#ccc" stroke-width="2"/><line x1="741" y1="1468.1" x2="751" y2="1468.1" stroke="#000" stroke-width="2"/><line x1="751" y1="1528.7" x2="1663" y2="1528.7" stroke="#ccc" stroke-width="2"/><line x1="741" y1="1528.7" x2="751" y2="1528.7" stroke="#000" stroke-width="2"/><line x1="751" y1="1589.3" x2="1663" y2="1589.3" stroke="#ccc" stroke-width="2"/><line x1="741" y1="1589.3" x2="751" y2="1589.3" stroke="#000" stroke-width="2"/><line x1="751" y1="1649.9" x2="1663" y2="1649.9" stroke="#ccc" stroke-width="2"/><line x1="741" y1="1649.9" x2="751" y2="1649.9" stroke="#000" stroke-width="2"/><line x1="751" y1="1710.5" x2="1663" y2="1710.5" stroke="#ccc" stroke-width="2"/><line x1="741" y1="1710.5" x2="751" y2="1710.5" stroke="#000" stroke-width="2"/><rect x="751" y="1110.1" width="816.6" height="48.3" fill="#6f267b"/><text x="1159.3" y="1142.0" text-anchor="middle" font-size="23.500" font-weight="700" fill="#fff">22,385</text><text x="735" y="1142.0" text-anchor="end" font-size="24">LAMAR</text><rect x="751" y="1170.7" width="557.9" height="48.3" fill="#432a83"/><text x="1029.9" y="1202.6" text-anchor="middle" font-size="23.500" font-weight="700" fill="#fff">15,293</text><text x="735" y="1202.6" text-anchor="end" font-size="24">CONGRESS</text><rect x="751" y="1231.3" width="542.9" height="48.3" fill="#4759a5"/><text x="1022.4" y="1263.2" text-anchor="middle" font-size="23.500" font-weight="700" fill="#fff">14,882</text><text x="735" y="1263.2" text-anchor="end" font-size="24">6TH</text><rect x="751" y="1291.9" width="484.5" height="48.3" fill="#5586c0"/><text x="993.2" y="1323.8" text-anchor="middle" font-size="23.500" font-weight="700" fill="#fff">13,280</text><text x="735" y="1323.8" text-anchor="end" font-size="24">Null</text><rect x="751" y="1352.5" width="431.1" height="48.3" fill="#6ea4ad"/><text x="966.5" y="1384.4" text-anchor="middle" font-size="23.500" font-weight="700" fill="#000">11,817</text><text x="735" y="1384.4" text-anchor="end" font-size="24">CESAR CHAVEZ</text><rect x="751" y="1413.1" width="430.4" height="48.3" fill="#84b486"/><text x="966.2" y="1445.0" text-anchor="middle" font-size="23.500" font-weight="700" fill="#000">11,797</text><text x="735" y="1445.0" text-anchor="end" font-size="24">RIVERSIDE</text><rect x="751" y="1473.7" width="401.0" height="48.3" fill="#9ebe6a"/><text x="951.5" y="1505.6" text-anchor="middle" font-size="23.500" font-weight="700" fill="#000">10,991</text><text x="735" y="1505.6" text-anchor="end" font-size="24">IH 35 SVRD</text><rect x="751" y="1534.3" width="398.1" height="48.3" fill="#babd5d"/><text x="950.0" y="1566.2" text-anchor="middle" font-size="23.500" font-weight="700" fill="#000">10,912</text><text x="735" y="1566.2" text-anchor="end" font-size="24">RUTHERFORD</text><rect x="751" y="1594.9" width="340.0" height="48.3" fill="#d3b355"/><text x="921.0" y="1626.8" text-anchor="middle" font-size="23.500" font-weight="700" fill="#000">9,320</text><text x="735" y="1626.8" text-anchor="end" font-size="24">1ST</text><rect x="751" y="1655.5" width="324.3" height="48.3" fill="#db974b"/><text x="913.2" y="1687.4" text-anchor="middle" font-size="23.500" font-weight="700" fill="#000">8,891</text><text x="735" y="1687.4" text-anchor="end" font-size="24">5TH</text><line x1="751" y1="1103.5" x2="751" y2="1711.5" stroke="#000" stroke-width="2.500"/><text x="717" y="1060" font-size="24" font-weight="700">Street</text><text x="1206" y="1779.500" text-anchor="middle" font-size="24" font-weight="700">Calls</text></svg><svg style="position:absolute;left:1674.3px;top:1785.8px" width="12" height="12" viewBox="0 0 12 12"><path d="M10.200 0v10.200H0" fill="none" stroke="#ababab" stroke-width="3.200"/></svg><div style="position:absolute;left:1696.0px;top:928.0px;width:1202.0px;height:876.0px;background:#fff;border-radius:5px;"></div><div class="t" style="top:940.9px;font-size:32px;left:1711.5px;color:#111;letter-spacing:0.33px;">Top Complaints</div><svg style="position:absolute;left:1696px;top:990px" width="1194" height="813" viewBox="1696 990 1194 813" font-family="Liberation Sans, sans-serif"><text x="1739.0" y="1023.5" font-size="20" fill="#9ebe6a">Dangerous/Vicious Dog Investigation</text><text x="1838.0" y="1049.7" font-size="20" fill="#d3b355">ATD - Dig Tess Request</text><text x="1901.7" y="1072.8" font-size="22" fill="#84b486">Concerns in the ROW</text><text x="1855.4" y="1098.6" font-size="22" fill="#5586c0">AW - Water Conservation Violation</text><text x="1849.8" y="1125.3" font-size="22" fill="#dd6a42">AE Street Light Issue - Address</text><text x="2068.0" y="1147.6" font-size="18" fill="#db974b">Traffic Signal - Timing</text><text x="1872.0" y="1155.5" font-size="22" fill="#dd6a42">Wildlife Exposure</text><text x="1839.5" y="1183.0" font-size="24" fill="#5586c0">Public Health - Graffiti Abatement</text><text x="1896.7" y="1206.0" font-size="20" fill="#6ea4ad">Traffic Engineering - General</text><text x="1834.6" y="1231.6" font-size="24" fill="#db974b">APD - Vehicle Abatement</text><text x="1815.7" y="1264.0" font-size="22" fill="#db974b">Shared Micromobility</text><text x="2069.4" y="1269.0" font-size="28" fill="#6f267b">ATD - Other</text><text x="1876.2" y="1292.8" font-size="24" fill="#432a83">ARR Brush and Bulk</text><text x="1837.2" y="1342.0" font-size="34" fill="#6ea4ad">Animal Control - Assistance Request</text><text x="1731.3" y="1388.0" font-size="46" fill="#432a83">Traffic Signal - Maintenance</text><text x="2050.6" y="1637.4" font-size="22" fill="#c4392d">Animal Bite</text><text x="1917.5" y="1785.8" font-size="20" fill="#4759a5">Austin Code - Coronavirus</text><text x="2203.4" y="1785.6" font-size="20" fill="#c4392d">ATD - Concerns in Right of Way</text><text x="2233.6" y="1764.1" font-size="22" fill="#c4392d">ARR - Dead Animal Collection</text><text x="2294.6" y="1730.0" font-size="22" fill="#5586c0">Found Animal - Pick Up</text><text x="2651.0" y="1752.0" font-size="20" fill="#6ea4ad">Loose Animal Notice</text><text x="2551.4" y="1785.6" font-size="20" fill="#432a83">Animal Services - Contact Request</text><text transform="translate(1804.0,1037.4) rotate(90)" font-size="20" fill="#4759a5">Bridge Repair</text><text transform="translate(1772.0,1053.3) rotate(90)" font-size="20" fill="#84b486">Austin Code - Signs/Billboards</text><text transform="translate(1740.5,1216.7) rotate(90)" font-size="20" fill="#84b486">ARR - Bulk</text><text transform="translate(1737.0,1444.0) rotate(90)" font-size="20" fill="#db974b">Traffic Signal - New/Change</text><text transform="translate(1763.4,1428.4) rotate(90)" font-size="20" fill="#d3b355">ATD - Traffic Sign Maintenance</text><text transform="translate(1805.0,1413.6) rotate(90)" font-size="20" fill="#babd5d">Channels/Creeks/Drainage Easement</text><text transform="translate(1835.0,1417.8) rotate(90)" font-size="22" fill="#4759a5">Sign - Traffic Sign Emergency</text><text transform="translate(1875.4,1419.0) rotate(90)" font-size="22" fill="#babd5d">Lane/Road Closure Notification</text><text transform="translate(1911.3,1424.0) rotate(90)" font-size="22" fill="#d3b355">Parking Violation Enforcement</text><text transform="translate(1943.0,1427.0) rotate(90)" font-size="22" fill="#9ebe6a">Traffic Signal - Dig Tess Request</text><text transform="translate(1980.7,1423.0) rotate(90)" font-size="24" fill="#84b486">ACD - Request Code Officer</text><text transform="translate(2011.4,1414.7) rotate(90)" font-size="24" fill="#babd5d">Loud Commercial Music</text><text transform="translate(2041.8,1407.0) rotate(90)" font-size="24" fill="#9ebe6a">Debris in Street</text><text transform="translate(2074.5,1425.5) rotate(90)" font-size="26" fill="#432a83">ARR - Compost</text><text transform="translate(2051.2,1648.8) rotate(90)" font-size="22" fill="#6ea4ad">Loud Music</text><text transform="translate(2194.3,1694.5) rotate(90)" text-anchor="end" font-size="28" fill="#432a83">Pothole Repair</text><text transform="translate(2233.9,1707.3) rotate(90)" text-anchor="end" font-size="22" fill="#432a83">Obstruction in ROW</text><text transform="translate(2309.8,1679.0) rotate(90)" text-anchor="end" font-size="20" fill="#dd6a42">Noise Complaints</text><text transform="translate(2342.3,1641.0) rotate(90)" text-anchor="end" font-size="20" fill="#db974b">Tree Removal</text><text transform="translate(2377.7,1700.3) rotate(90)" text-anchor="end" font-size="28" fill="#c4392d">ARR - Garbage</text><text transform="translate(2414.3,1675.4) rotate(90)" text-anchor="end" font-size="22" fill="#6f267b">Street Follow-Up</text><text transform="translate(2451.7,1685.3) rotate(90)" text-anchor="end" font-size="22" fill="#432a83">Street Light Failure</text><text transform="translate(2488.7,1664.7) rotate(90)" text-anchor="end" font-size="20" fill="#dd6a42">Shared Mobility</text><text transform="translate(2523.0,1636.0) rotate(90)" text-anchor="end" font-size="20" fill="#6f267b">Signs</text><text transform="translate(2546.4,1654.6) rotate(90)" text-anchor="end" font-size="20" fill="#db974b">Enforcement</text><text transform="translate(2571.5,1756.0) rotate(90)" text-anchor="end" font-size="26" fill="#6ea4ad">Micromobility</text><text transform="translate(2606.0,1679.3) rotate(90)" text-anchor="end" font-size="32" fill="#babd5d">Investigation</text><text transform="translate(2711.0,1649.3) rotate(90)" text-anchor="end" font-size="22" fill="#c4392d">Parking</text><text transform="translate(2744.4,1695.6) rotate(90)" text-anchor="end" font-size="20" fill="#d3b355">Park - Keep</text><text transform="translate(2783.0,1709.0) rotate(90)" text-anchor="end" font-size="22" fill="#c4392d">Code Complaint</text><text transform="translate(2843.4,1708.0) rotate(90)" text-anchor="end" font-size="22" fill="#6ea4ad">Sign Maintenance</text></svg><svg style="position:absolute;left:2880.1px;top:1786.1px" width="12" height="12" viewBox="0 0 12 12"><path d="M10.200 0v10.200H0" fill="none" stroke="#ababab" stroke-width="3.200"/></svg><div style="position:absolute;left:0.0px;top:76.0px;width:2904.0px;height:80.0px;background:#eef1f4;box-shadow:0 2px 4px rgba(0,0,0,.12);z-index:5;"></div><div style="position:absolute;left:0.0px;top:156.0px;width:2904.0px;height:44.0px;background:linear-gradient(to bottom, rgba(0,0,0,.22), rgba(0,0,0,.09) 40%, rgba(0,0,0,0));z-index:4;"></div><div style="position:absolute;z-index:6;left:0;top:0;width:2904px;height:160px;pointer-events:none"><div class="t" style="top:106.0px;font-size:29.5px;left:20.5px;color:#111;">Filters</div><svg style="position:absolute;left:2853px;top:111px" width="24" height="18" viewBox="0 0 24 18"><path d="M0 1.500h24M0 8.500h24M0 15.500h24" stroke="#9a9da0" stroke-width="2"/></svg></div><div style="position:absolute;left:0.0px;top:0.0px;width:2904.0px;height:76.0px;background:#404853;box-shadow:0 7px 12px rgba(0,0,0,.2);z-index:7;border-top:1.200px solid #08090b;box-sizing:border-box;"></div><div style="position:absolute;left:0.0px;top:76.0px;width:2904.0px;height:1.5px;background:#dcdcdc;z-index:7;"></div><div style="position:absolute;z-index:8;left:0;top:0;width:2904px;height:80px"><svg style="position:absolute;left:24px;top:18px" width="32" height="44" viewBox="0 0 32 44"><path d="M25 4L7 22l18 18" fill="none" stroke="#3f8fdc" stroke-width="6.500"/></svg><div class="t" style="top:19.5px;font-size:35.2px;left:100.0px;color:#fff;letter-spacing:0.1px;">Austin 311 Calls</div><svg style="position:absolute;left:2230.0px;top:10.0px" width="48" height="48" viewBox="0 0 24 24"><path fill="#8f8f8f" d="M10 18h4v-2h-4v2zM3 6v2h18V6H3zm3 7h12v-2H6v2z"/></svg><svg style="position:absolute;left:2296px;top:8px" width="56" height="56" viewBox="0 0 28 28"><path fill="#8f8f8f" d="M1 21.500L21 1.500V14a7 7 0 0 0-6 7.500z"/><g transform="translate(14.5,15) scale(0.52)"><path fill="#8f8f8f" d="M19.430 12.980c.04-.32.07-.64.07-.98s-.03-.66-.07-.98l2.110-1.650c.19-.15.24-.42.12-.64l-2-3.460c-.12-.22-.39-.3-.61-.22l-2.490 1c-.52-.4-1.080-.73-1.690-.98l-.38-2.650C14.460 2.180 14.250 2 14 2h-4c-.25 0-.46.18-.49.42l-.38 2.650c-.61.25-1.170.59-1.690.98l-2.490-1c-.23-.09-.49 0-.61.22l-2 3.460c-.13.22-.07.49.12.64l2.110 1.650c-.04.32-.07.65-.07.98s.03.66.07.98l-2.110 1.650c-.19.15-.24.42-.12.64l2 3.460c.12.22.39.3.61.22l2.490-1c.52.4 1.080.73 1.690.98l.38 2.650c.03.24.24.42.49.42h4c.25 0 .46-.18.49-.42l.38-2.650c.61-.25 1.170-.59 1.690-.98l2.490 1c.23.09.49 0 .61-.22l2-3.460c.12-.22.07-.49-.12-.64l-2.110-1.650zM12 15.500c-1.930 0-3.500-1.570-3.500-3.500s1.570-3.500 3.500-3.500 3.500 1.570 3.500 3.500-1.570 3.500-3.500 3.500z"/></g></svg><svg style="position:absolute;left:2366.0px;top:10.0px" width="48" height="48" viewBox="0 0 24 24"><path fill="#8f8f8f" d="M19 9h-4V3H9v6H5l7 7 7-7zM5 18v2h14v-2H5z"/></svg><svg style="position:absolute;left:2434.0px;top:10.0px" width="48" height="48" viewBox="0 0 24 24"><path fill="#8f8f8f" d="M9 16h6v-6h4l-7-7-7 7h4zm-4 2h14v2H5z"/></svg><svg style="position:absolute;left:2574.0px;top:10.0px" width="48" height="48" viewBox="0 0 24 24"><path fill="#8f8f8f" d="M12 2C6.48 2 2 6.48 2 12s4.48 10 10 10 10-4.48 10-10S17.52 2 12 2zm-1 17.93c-3.95-.49-7-3.85-7-7.93 0-.62.08-1.21.21-1.79L9 15v1c0 1.1.9 2 2 2v1.93zm6.9-2.54c-.26-.81-1-1.39-1.9-1.39h-1v-3c0-.55-.45-1-1-1H8v-2h2c.55 0 1-.45 1-1V7h2c1.1 0 2-.9 2-2v-.41c2.93 1.19 5 4.06 5 7.41 0 2.08-.8 3.97-2.1 5.39z"/></svg><svg style="position:absolute;left:2642.0px;top:10.0px" width="48" height="48" viewBox="0 0 24 24"><path fill="#8f8f8f" d="M15 15H3v2h12v-2zm0-8H3v2h12V7zM3 13h18v-2H3v2zm0 8h18v-2H3v2zM3 3v2h18V3H3z"/></svg><svg style="position:absolute;left:2710.0px;top:10.0px" width="48" height="48" viewBox="0 0 24 24"><path fill="#8f8f8f" d="M7 5h2V3H7v2zm0 8h2v-2H7v2zm0 8h2v-2H7v2zm4-4h2v-2h-2v2zm0 4h2v-2h-2v2zm-8 0h2v-2H3v2zm0-4h2v-2H3v2zm0-4h2v-2H3v2zm0-4h2V7H3v2zm0-4h2V3H3v2zm8 8h2v-2h-2v2zm8 4h2v-2h-2v2zm0-4h2v-2h-2v2zm0 8h2v-2h-2v2zm0-12h2V7h-2v2zm-8 0h2V7h-2v2zm8-6v2h2V3h-2zm-8 2h2V3h-2v2zm4 16h2v-2h-2v2zm0-8h2v-2h-2v2zm0-8h2V3h-2v2z"/></svg><svg style="position:absolute;left:2778.0px;top:9.0px" width="48" height="48" viewBox="0 0 24 24"><path fill="#8f8f8f" d="M12 17c1.1 0 2-.9 2-2s-.9-2-2-2-2 .9-2 2 .9 2 2 2zm6-9h-1V6c0-2.76-2.24-5-5-5S7 3.240 7 6h1.900c0-1.710 1.390-3.100 3.100-3.100 1.710 0 3.100 1.390 3.100 3.100v2H6c-1.100 0-2 .9-2 2v10c0 1.100.9 2 2 2h12c1.100 0 2-.9 2-2V10c0-1.100-.9-2-2-2zm0 12H6V10h12v10z"/></svg><svg style="position:absolute;left:2846.0px;top:10.0px" width="48" height="48" viewBox="0 0 24 24"><path fill="#8f8f8f" d="M12 2C6.48 2 2 6.48 2 12s4.48 10 10 10 10-4.48 10-10S17.52 2 12 2zm1 17h-2v-2h2v2zm2.07-7.75l-.9.92C13.450 12.900 13 13.500 13 15h-2v-.5c0-1.100.45-2.100 1.170-2.830l1.240-1.260c.37-.36.59-.86.59-1.410 0-1.100-.9-2-2-2s-2 .9-2 2H8c0-2.210 1.790-4 4-4s4 1.790 4 4c0 .88-.36 1.680-.93 2.250z"/></svg><svg style="position:absolute;left:2502px;top:9.800px" width="52" height="52" viewBox="-26 -26 52 52"><circle r="26" fill="#020203"/><path transform="rotate(10)" d="M4.500 -7 C7.500 -10.500 11.500 -11 14 -8.500" fill="none" stroke="#ec8f68" stroke-width="2.400" stroke-dasharray="4.500 0.600"/><path transform="rotate(40)" d="M9.500 -14 C13 -13 16 -9.500 16.500 -5.500" fill="none" stroke="#f0a862" stroke-width="2.100" stroke-dasharray="3.400 1.300"/><path transform="rotate(70)" d="M4.500 -7 C7.500 -10.500 11.500 -11 14 -8.500" fill="none" stroke="#ec8f68" stroke-width="2.400" stroke-dasharray="4.500 0.600"/><path transform="rotate(100)" d="M9.500 -14 C13 -13 16 -9.500 16.500 -5.500" fill="none" stroke="#f0a862" stroke-width="2.100" stroke-dasharray="3.400 1.300"/><path transform="rotate(130)" d="M4.500 -7 C7.500 -10.500 11.500 -11 14 -8.500" fill="none" stroke="#ec8f68" stroke-width="2.400" stroke-dasharray="4.500 0.600"/><path transform="rotate(160)" d="M9.500 -14 C13 -13 16 -9.500 16.500 -5.500" fill="none" stroke="#f0a862" stroke-width="2.100" stroke-dasharray="3.400 1.300"/><path transform="rotate(190)" d="M4.500 -7 C7.500 -10.500 11.500 -11 14 -8.500" fill="none" stroke="#ec8f68" stroke-width="2.400" stroke-dasharray="4.500 0.600"/><path transform="rotate(220)" d="M9.500 -14 C13 -13 16 -9.500 16.500 -5.500" fill="none" stroke="#f0a862" stroke-width="2.100" stroke-dasharray="3.400 1.300"/><path transform="rotate(250)" d="M4.500 -7 C7.500 -10.500 11.500 -11 14 -8.500" fill="none" stroke="#ec8f68" stroke-width="2.400" stroke-dasharray="4.500 0.600"/><path transform="rotate(280)" d="M9.500 -14 C13 -13 16 -9.500 16.500 -5.500" fill="none" stroke="#f0a862" stroke-width="2.100" stroke-dasharray="3.400 1.300"/><path transform="rotate(310)" d="M4.500 -7 C7.500 -10.500 11.500 -11 14 -8.500" fill="none" stroke="#ec8f68" stroke-width="2.400" stroke-dasharray="4.500 0.600"/><path transform="rotate(340)" d="M9.500 -14 C13 -13 16 -9.500 16.500 -5.500" fill="none" stroke="#f0a862" stroke-width="2.100" stroke-dasharray="3.400 1.300"/><path transform="rotate(15)" d="M8 -19 C13 -17.500 17.500 -13.500 19.500 -8" fill="none" stroke="#f5c063" stroke-width="1.900" stroke-dasharray="3.200 2.200 1.600 2.200"/><path transform="rotate(87)" d="M8 -19 C13 -17.500 17.500 -13.500 19.500 -8" fill="none" stroke="#f5c063" stroke-width="1.900" stroke-dasharray="3.200 2.200 1.600 2.200"/><path transform="rotate(159)" d="M8 -19 C13 -17.500 17.500 -13.500 19.500 -8" fill="none" stroke="#f5c063" stroke-width="1.900" stroke-dasharray="3.200 2.200 1.600 2.200"/><path transform="rotate(231)" d="M8 -19 C13 -17.500 17.500 -13.500 19.500 -8" fill="none" stroke="#f5c063" stroke-width="1.900" stroke-dasharray="3.200 2.200 1.600 2.200"/><path transform="rotate(303)" d="M8 -19 C13 -17.500 17.500 -13.500 19.500 -8" fill="none" stroke="#f5c063" stroke-width="1.900" stroke-dasharray="3.200 2.200 1.600 2.200"/><text x="0" y="2.800" text-anchor="middle" font-family="Liberation Sans, sans-serif" font-size="10.500" fill="#fff">AI</text></svg><div style="position:absolute;left:2502.0px;top:50.0px;width:54.0px;height:24.0px;background:#5b9cf2;border-radius:6px;"></div><div class="t" style="top:54.0px;font-size:16px;left:1529.0px;width:2000px;text-align:center;color:#fff;font-weight:700;-webkit-text-stroke:0.5px #fff;">BETA</div></div><div style="position:absolute;left:0;top:0;z-index:20"><div style="position:absolute;left:2778.0px;top:1684.0px;width:80.0px;height:80.0px;background:#3875cc;border-radius:50%;box-shadow:0 5px 10px rgba(0,0,0,.35);"></div><svg style="position:absolute;left:2794px;top:1700px" width="48" height="48" viewBox="0 0 24 24"><path fill="#fff" d="M19 3H5c-1.100 0-2 .9-2 2v14c0 1.100.9 2 2 2h14c1.100 0 2-.9 2-2V5c0-1.100-.9-2-2-2zM9 17H7v-7h2v7zm4 0h-2V7h2v10zm4 0h-2v-4h2v4z"/></svg><div style="position:absolute;left:2104.0px;top:362.0px;width:800.0px;height:1267.0px;background:#fafafa;box-shadow:0 6px 24px rgba(0,0,0,.42), 0 0 8px rgba(0,0,0,.2);"></div><div style="position:absolute;left:2104.0px;top:362.0px;width:800.0px;height:112.0px;background:#404853;"></div><div class="t" style="top:397.1px;font-size:40px;left:2121.5px;color:#fff;letter-spacing:-0.18px;">Data Providers</div><svg style="position:absolute;left:2862px;top:406px" width="24" height="24" viewBox="0 0 24 24"><path d="M2 2l20 20M22 2L2 22" stroke="#fff" stroke-width="2.800"/></svg><div style="position:absolute;left:2125.0px;top:476.3px;width:759.0px;height:646.7px;background:#fdfdfd;border:2px solid #dedede;box-sizing:border-box;border-radius:4px;box-shadow:0 1px 3px rgba(0,0,0,.12);"></div><div style="position:absolute;left:2127.0px;top:579.2px;width:755.0px;height:2.0px;background:#dcdcdc;"></div><div style="position:absolute;left:2127.0px;top:681.2px;width:755.0px;height:2.0px;background:#dcdcdc;"></div><div style="position:absolute;left:2127.0px;top:783.0px;width:755.0px;height:2.0px;background:#dcdcdc;"></div><div style="position:absolute;left:2127.0px;top:884.0px;width:755.0px;height:2.0px;background:#dcdcdc;"></div><div style="position:absolute;left:2127.0px;top:1059.0px;width:755.0px;height:2.0px;background:#dcdcdc;"></div><div style="position:absolute;left:2127.0px;top:886.0px;width:755.0px;height:112.0px;background:#e6e6e6;"></div><svg style="position:absolute;left:2142px;top:497px" width="64" height="64" viewBox="0 0 64 64"><circle cx="32" cy="32" r="29.500" fill="#fff" stroke="#333" stroke-width="2"/><g transform="translate(10.500,9) scale(1.800)"><path fill="#3a3d42" d="M5 4v2h14V4H5zm0 10h4v6h6v-6h4l-7-7-7 7z"/></g></svg><svg style="position:absolute;left:2155px;top:619px" width="42" height="44" viewBox="0 0 42 44"><g fill="none" stroke="#e2573d" stroke-width="2.400" stroke-linejoin="miter"><path d="M2 11.500L21 2l19 9.500L21 21z"/><path d="M2 17.500v5.500L21 32.500 40 23v-5.500L21 27z"/><path d="M2 28v5.500L21 43l19-9.500V28L21 37.500z"/></g></svg><svg style="position:absolute;left:2146px;top:705px" width="60" height="62" viewBox="0 0 60 62"><path d="M15.500 2h29L59 27 44.500 52h-29L1 27z" fill="#2a5bc4"/><path d="M30 27l14 25h.5L59 27 50 12z" fill="#1f469f" opacity=".75"/><circle cx="29" cy="26" r="10" fill="none" stroke="#fff" stroke-width="2.600"/><path d="M36 33.500l6.500 6.500" stroke="#fff" stroke-width="3.400" stroke-linecap="round"/><path d="M25 27.500v3M29 22.500v9.500M33 25.500v5" stroke="#fff" stroke-width="2.400"/><text x="30" y="60" text-anchor="middle" font-family="Liberation Sans, sans-serif" font-size="5.800" fill="#333">Google BigQuery</text></svg><svg style="position:absolute;left:2155px;top:815px" width="42" height="44" viewBox="0 0 42 44"><defs><clipPath id="ec"><circle cx="21" cy="22" r="21"/></clipPath></defs><g clip-path="url(#ec)"><path d="M0 0h42v12.500H4z" fill="#f5d24b"/><path d="M0 0h14L4 13H0z" fill="#eeb23f"/><rect x="0" y="15.500" width="20" height="13" fill="#353535"/><path d="M20 15.500h12a6.500 6.500 0 0 1 0 13H20z" fill="#4aa3df"/><path d="M0 31.500h36L42 44H0z" fill="#56bfb0"/><path d="M0 31.500h9L18 44H0z" fill="#3f9a8e"/></g></svg><svg style="position:absolute;left:2157px;top:919px" width="38" height="42" viewBox="0 0 38 42"><rect x="0" y="8" width="5" height="26" rx="1" fill="#5b8fd0"/><rect x="33" y="8" width="5" height="26" rx="1" fill="#5b8fd0"/><rect x="7" y="3" width="6" height="36" rx="1.500" fill="#4d7fc4"/><rect x="25" y="3" width="6" height="36" rx="1.500" fill="#3563a8"/><rect x="12" y="0" width="14" height="42" rx="3" fill="#4271b8"/><rect x="12" y="0" width="7" height="42" rx="3" fill="#4d7fc4"/></svg><div class="t" style="top:516.1px;font-size:30px;left:2232.5px;color:#1c1c1c;">Local uploads</div><div style="position:absolute;left:2606.0px;top:498.0px;width:256.0px;height:72.0px;background:#3875cc;border-radius:4px;box-shadow:0 2px 4px rgba(0,0,0,.3);"></div><div class="t" style="top:519.3px;font-size:29.5px;left:1734.5px;width:2000px;text-align:center;color:#fff;letter-spacing:1.1px;-webkit-text-stroke:0.5px #fff;">MANAGE</div><div class="t" style="top:622.8px;font-size:30px;left:2227.0px;color:#1c1c1c;">Databricks</div><div class="t" style="top:724.6px;font-size:30px;left:2227.0px;color:#1c1c1c;">BigQuery</div><div class="t" style="top:826.4px;font-size:30px;left:2227.0px;color:#1c1c1c;">Elasticsearch</div><div class="t" style="top:928.8px;font-size:30px;left:2227.0px;color:#1c1c1c;">Postgres</div><svg style="position:absolute;left:2766.0px;top:601.0px" width="48" height="48" viewBox="0 0 24 24"><path fill="#4a4e57" d="M3 17.250V21h3.750L17.810 9.940l-3.750-3.750L3 17.250zM20.710 7.040c.39-.39.39-1.020 0-1.410l-2.340-2.340c-.39-.39-1.020-.39-1.410 0l-1.830 1.830 3.750 3.750 1.830-1.830z"/></svg><svg style="position:absolute;left:2814.0px;top:601.0px" width="48" height="48" viewBox="0 0 24 24"><path fill="#4a4e57" d="M6 19c0 1.100.9 2 2 2h8c1.100 0 2-.9 2-2V7H6v12zM19 4h-3.500l-1-1h-5l-1 1H5v2h14V4z"/></svg><svg style="position:absolute;left:2766.0px;top:703.0px" width="48" height="48" viewBox="0 0 24 24"><path fill="#4a4e57" d="M3 17.250V21h3.750L17.810 9.940l-3.750-3.750L3 17.250zM20.710 7.040c.39-.39.39-1.020 0-1.410l-2.340-2.340c-.39-.39-1.020-.39-1.410 0l-1.830 1.830 3.750 3.750 1.830-1.830z"/></svg><svg style="position:absolute;left:2814.0px;top:703.0px" width="48" height="48" viewBox="0 0 24 24"><path fill="#4a4e57" d="M6 19c0 1.100.9 2 2 2h8c1.100 0 2-.9 2-2V7H6v12zM19 4h-3.500l-1-1h-5l-1 1H5v2h14V4z"/></svg><svg style="position:absolute;left:2766.0px;top:805.0px" width="48" height="48" viewBox="0 0 24 24"><path fill="#4a4e57" d="M3 17.250V21h3.750L17.810 9.940l-3.750-3.750L3 17.250zM20.710 7.040c.39-.39.39-1.020 0-1.410l-2.340-2.340c-.39-.39-1.020-.39-1.410 0l-1.830 1.830 3.750 3.750 1.830-1.830z"/></svg><svg style="position:absolute;left:2814.0px;top:805.0px" width="48" height="48" viewBox="0 0 24 24"><path fill="#4a4e57" d="M6 19c0 1.100.9 2 2 2h8c1.100 0 2-.9 2-2V7H6v12zM19 4h-3.500l-1-1h-5l-1 1H5v2h14V4z"/></svg><svg style="position:absolute;left:2766.0px;top:907.0px" width="48" height="48" viewBox="0 0 24 24"><path fill="#4a4e57" d="M3 17.250V21h3.750L17.810 9.940l-3.750-3.750L3 17.250zM20.710 7.040c.39-.39.39-1.020 0-1.410l-2.340-2.340c-.39-.39-1.020-.39-1.410 0l-1.830 1.830 3.750 3.750 1.830-1.830z"/></svg><svg style="position:absolute;left:2814.0px;top:907.0px" width="48" height="48" viewBox="0 0 24 24"><path fill="#4a4e57" d="M6 19c0 1.100.9 2 2 2h8c1.100 0 2-.9 2-2V7H6v12zM19 4h-3.500l-1-1h-5l-1 1H5v2h14V4z"/></svg><svg style="position:absolute;left:2718.0px;top:805.0px" width="48" height="48" viewBox="0 0 24 24"><path fill="#4a4e57" d="M5 4v2h14V4H5zm0 10h4v6h6v-6h4l-7-7-7 7z"/></svg><svg style="position:absolute;left:2156.0px;top:999.0px" width="48" height="48" viewBox="0 0 24 24"><path fill="#4a4e57" d="M12 4l-1.410 1.410L16.170 11H4v2h12.170l-5.580 5.590L12 20l8-8z"/></svg><svg style="position:absolute;left:2156.0px;top:1061.0px" width="48" height="48" viewBox="0 0 24 24"><path fill="#4a4e57" d="M12 4l-1.410 1.410L16.170 11H4v2h12.170l-5.580 5.590L12 20l8-8z"/></svg><div class="t" style="top:1013.6px;font-size:30px;left:2224.0px;-webkit-text-stroke:0.4px #000;">Data Sources</div><div class="t" style="top:1076.3px;font-size:30px;left:2224.0px;-webkit-text-stroke:0.4px #000;">Custom Queries</div><div style="position:absolute;left:2104.0px;top:1516.5px;width:800.0px;height:2.0px;background:#dcdcdc;"></div><div style="position:absolute;left:2116.0px;top:1539.0px;width:367.0px;height:72.0px;background:#3875cc;border-radius:4px;box-shadow:0 2px 4px rgba(0,0,0,.3);"></div><div class="t" style="top:1560.0px;font-size:29.5px;left:1300.0px;width:2000px;text-align:center;color:#fff;letter-spacing:1.35px;-webkit-text-stroke:0.5px #fff;">NEW PROVIDER</div></div><svg style="position:absolute;left:0;top:0;z-index:30" width="2904" height="1810" viewBox="0 0 2904 1810" font-family="Liberation Sans, sans-serif"><line x1="2517" y1="957" x2="2420" y2="951" stroke="#73fafd" stroke-width="11"/><polygon points="2372,948 2426,925 2423,978" fill="#73fafd"/><text x="2528" y="967.300" font-size="42" fill="#0433ff">Step 2</text><rect x="2147" y="1056.500" width="336.500" height="66" fill="none" stroke="#73fafd" stroke-width="10.500"/><line x1="2637.500" y1="1088.500" x2="2530" y2="1091" stroke="#73fafd" stroke-width="11"/><polygon points="2488.500,1091.500 2535.500,1066 2536,1117.500" fill="#73fafd"/><text x="2668.600" y="1098.400" font-size="42" fill="#0433ff">Step 3</text><text x="2687.500" y="1441.500" font-size="42" fill="#0433ff">Step 1</text><line x1="2750.500" y1="1463" x2="2786" y2="1609" stroke="#73fafd" stroke-width="10"/><polygon points="2797,1653 2759.500,1605.500 2811,1592.400" fill="#73fafd"/><rect x="2753.500" y="1671" width="122.500" height="113" fill="none" stroke="#73fafd" stroke-width="10"/></svg><div style="position:absolute;left:2898px;top:156px;width:6px;height:1654px;background:rgba(180,180,180,.24);z-index:26"></div><div style="position:absolute;left:2836px;top:156px;width:62px;height:1654px;background:linear-gradient(to right, rgba(0,0,0,0), rgba(0,0,0,.075));z-index:25;pointer-events:none"></div><svg style="position:absolute;left:0;top:1780px;z-index:40" width="2904" height="30" viewBox="0 0 2904 30"><path d="M0 8V30H22A22 22 0 0 1 0 8z" fill="#000"/><path d="M2904 9.500V30H2883.500A20.500 20.500 0 0 0 2904 9.500z" fill="#000"/></svg></div></body></html>
